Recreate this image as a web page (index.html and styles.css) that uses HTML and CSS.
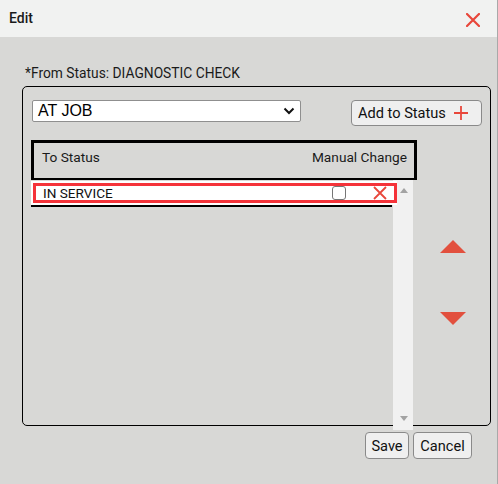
FILE: index.html
```html
<!DOCTYPE html>
<html>
<head>
<meta charset="utf-8">
<link rel="stylesheet" href="styles.css">
</head>
<body>
<div class="dialog">
  <div class="header">
    <span class="title">Edit</span>
    <svg class="close" width="14" height="14" viewBox="0 0 14 14"><path d="M1 1 L13 13 M13 1 L1 13" stroke="#e8473b" stroke-width="2.2" stroke-linecap="round"/></svg>
  </div>
  <div class="content">
    <div class="from">*From Status: DIAGNOSTIC CHECK</div>
    <div class="box">
      <div class="top-row">
        <div class="select">
          <span>AT JOB</span>
          <svg class="chev" width="12" height="8" viewBox="0 0 12 8"><path d="M1.5 1.5 L6 6 L10.5 1.5" fill="none" stroke="#111" stroke-width="2"/></svg>
        </div>
        <button class="btn add">Add to Status <svg class="plus" width="14" height="14" viewBox="0 0 14 14"><path d="M7 0 V14 M0 7 H14" stroke="#e8473b" stroke-width="1.8"/></svg></button>
      </div>
      <div class="main-row">
        <div class="table">
          <div class="thead"><span>To Status</span><span>Manual Change</span></div>
          <div class="tbody">
            <div class="list">
              <div class="row">
                <div class="row-inner">
                  <span class="name">IN SERVICE</span>
                  <span class="check"></span>
                  <svg class="del" width="14" height="14" viewBox="0 0 14 14"><path d="M1 1 L13 13 M13 1 L1 13" stroke="#e8473b" stroke-width="1.8"/></svg>
                </div>
              </div>
              <div class="line"></div>
            </div>
            <div class="scrollbar">
              <span class="sb-up"></span>
              <span class="sb-down"></span>
            </div>
          </div>
        </div>
        <div class="arrows">
          <span class="tri-up"></span>
          <span class="tri-down"></span>
        </div>
      </div>
    </div>
    <div class="footer">
      <button class="btn save">Save</button>
      <button class="btn cancel">Cancel</button>
    </div>
  </div>
</div>
</body>
</html>
```
FILE: styles.css
```css
html, body {
  margin: 0;
  padding: 0;
  background: #d8d8d6;
  overflow: hidden;
}
.dialog {
  width: 497px;
  height: 484px;
  border-right: 1px solid #a9a9a9;
  background: #d8d8d6;
  font-family: Roboto, "Liberation Sans", sans-serif;
  color: #111;
}
.header {
  height: 37px;
  background: #f1f2f1;
  display: flex;
  align-items: center;
  justify-content: space-between;
  padding: 0 17px 0 9px;
  box-sizing: border-box;
}
.title {
  font-size: 14px;
  font-weight: 500;
  color: #1a1a1a;
  margin-top: -1px;
}
.close {
  display: block;
  margin-top: 2px;
}
.content {
  padding: 28px 0 0 22px;
}
.from {
  font-size: 13.8px;
  line-height: 16px;
  height: 16px;
  padding-left: 3px;
  margin-bottom: 5px;
  color: #1a1a1a;
}
.box {
  width: 469px;
  height: 340px;
  box-sizing: border-box;
  border: 1px solid #000;
  border-radius: 5px;
  padding: 13px 8px 0 8px;
}
.top-row {
  display: flex;
  justify-content: space-between;
  align-items: flex-start;
}
.select {
  margin-left: 1px;
  width: 269px;
  height: 22px;
  box-sizing: border-box;
  background: #fff;
  border: 1px solid #8f8f8f;
  border-radius: 2px;
  display: flex;
  align-items: center;
  justify-content: space-between;
  padding: 0 5px 0 5px;
  font-family: "Liberation Sans", Arial, sans-serif;
  font-size: 16px;
  color: #000;
}
.chev {
  display: block;
}
.btn {
  font-family: Roboto, "Liberation Sans", sans-serif;
  background: #efefef;
  border: 1px solid #8a8a8a;
  border-radius: 4px;
  color: #111;
  padding: 0;
  box-sizing: border-box;
}
.add {
  width: 131px;
  height: 26px;
  font-size: 14.6px;
  display: flex;
  align-items: center;
  padding-left: 6px;
  gap: 8px;
}
.plus {
  display: block;
}
.main-row {
  display: flex;
  margin-top: 14px;
}
.table {
  width: 386px;
}
.thead {
  height: 40px;
  box-sizing: border-box;
  border: 3px solid #000;
  border-bottom-width: 2px;
  display: flex;
  justify-content: space-between;
  align-items: flex-start;
  padding: 6px 7px 0 8px;
  font-size: 13.7px;
  line-height: 16px;
  color: #1a1a1a;
}
.tbody {
  display: flex;
  height: 250px;
}
.list {
  width: 362px;
}
.row {
  position: relative;
  z-index: 1;
  width: 366px;
  margin-top: 1px;
  background: #fff;
  padding: 2px 0 2px 2px;
  box-sizing: border-box;
}
.row-inner {
  height: 20px;
  box-sizing: border-box;
  border: 3px solid #f5333a;
  display: flex;
  align-items: center;
  padding: 0 7px 0 7px;
  font-size: 13.6px;
  color: #111;
}
.name {
  flex: 1;
}
.check {
  flex-shrink: 0;
  width: 14px;
  height: 14px;
  box-sizing: border-box;
  border: 1px solid #767676;
  border-radius: 3px;
  background: #fff;
  margin-right: 27px;
}
.del {
  display: block;
  flex-shrink: 0;
}
.line {
  height: 2px;
  background: #000;
  width: 361px;
}
.scrollbar {
  width: 20px;
  height: 250px;
  background: #f1f1f1;
  position: relative;
}
.sb-up {
  position: absolute;
  left: 7px;
  top: 8px;
  width: 0;
  height: 0;
  border-left: 4px solid transparent;
  border-right: 4px solid transparent;
  border-bottom: 5px solid #a3a3a3;
}
.sb-down {
  position: absolute;
  left: 7px;
  top: 236px;
  width: 0;
  height: 0;
  border-left: 4px solid transparent;
  border-right: 4px solid transparent;
  border-top: 5px solid #a3a3a3;
}
.arrows {
  margin-left: 23px;
  padding-top: 100px;
  display: flex;
  flex-direction: column;
}
.tri-up {
  width: 0;
  height: 0;
  border-left: 13px solid transparent;
  border-right: 13px solid transparent;
  border-bottom: 13px solid #e2503e;
}
.tri-down {
  margin-top: 59px;
  width: 0;
  height: 0;
  border-left: 13px solid transparent;
  border-right: 13px solid transparent;
  border-top: 13px solid #e2503e;
}
.footer {
  display: flex;
  justify-content: flex-end;
  gap: 4px;
  margin-top: 6px;
  padding-right: 25px;
}
.save, .cancel {
  height: 27px;
  font-size: 14.6px;
}
.save {
  width: 44px;
}
.cancel {
  width: 59px;
}
```
